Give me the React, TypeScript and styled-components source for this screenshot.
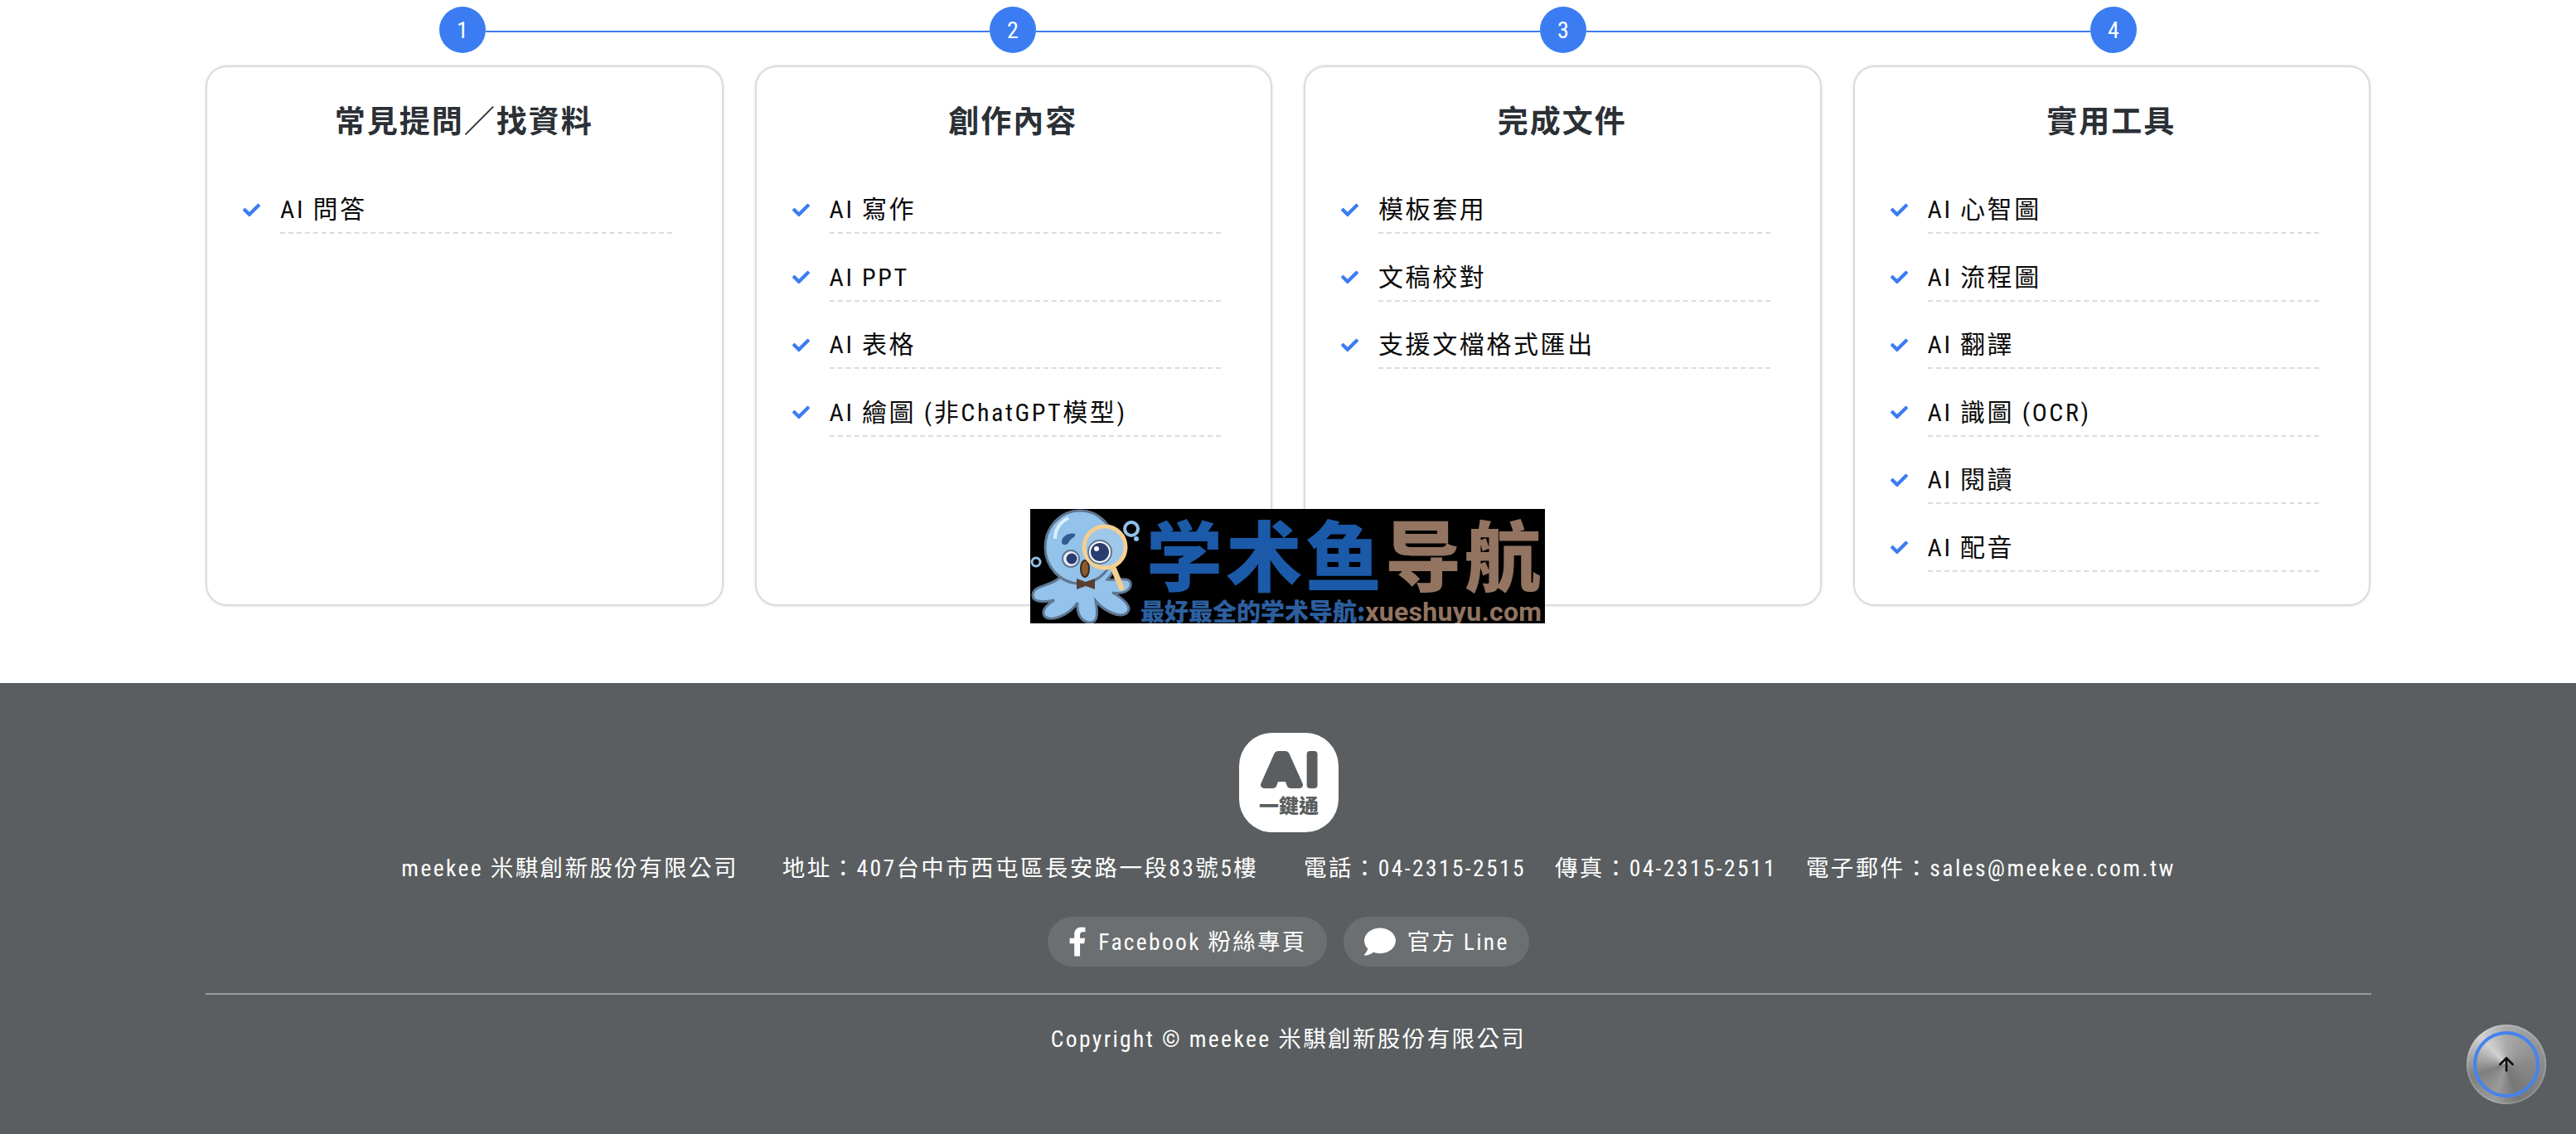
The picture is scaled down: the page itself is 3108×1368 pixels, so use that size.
import React from 'react';
import styled, { createGlobalStyle } from 'styled-components';
import { FaCheck, FaComment, FaFacebookF } from 'react-icons/fa';
import { ArrowUp } from 'lucide-react';

const FONT = `Roboto, "Noto Sans CJK TC", sans-serif`;

const GlobalStyle = createGlobalStyle`
  html, body {
    margin: 0;
    padding: 0;
    background: #fff;
    height: 1368px;
    overflow: hidden;
    font-family: ${FONT};
    font-stretch: 75%;
  }
`;

const Main = styled.main`
  background: #fff;
  padding: 8px 248px 93px 248px;
`;

const Steps = styled.div`
  display: flex;
  align-items: center;
  padding: 0 282px 0 282px;
  margin-bottom: 15px;
`;

const StepDot = styled.div`
  width: 56px;
  height: 56px;
  flex: none;
  border-radius: 50%;
  background: #3b7cf2;
  color: #fff;
  font-size: 28px;
  display: flex;
  align-items: center;
  justify-content: center;
`;

const StepLine = styled.div`
  flex: 1;
  height: 2px;
  margin-top: 4px;
  background: #3b7cf2;
`;

const Cards = styled.div`
  display: grid;
  grid-template-columns: repeat(4, 1fr);
  gap: 38px;
`;

const Card = styled.section`
  border: 2px solid #dcdcdc;
  border-radius: 26px;
  box-shadow: 0 0 3px rgba(0, 0, 0, 0.15);
  padding: 42px 60px 12px 43px;
  height: 652px;
  box-sizing: border-box;
`;

const CardTitle = styled.h3`
  margin: 0 -16px 59px 0;
  text-align: center;
  font-size: 37px;
  line-height: 50px;
  font-weight: 700;
  letter-spacing: 2px;
  color: #2b3036;
`;

const List = styled.ul`
  list-style: none;
  margin: 0;
  padding: 0;
`;

const Item = styled.li`
  display: flex;
  align-items: flex-start;
  margin-bottom: 31.5px;
  color: #0a0a0a;
  font-size: 30px;
  line-height: 42px;
  letter-spacing: 2.6px;
`;

const Tick = styled.span`
  flex: none;
  width: 45px;
  height: 42px;
  display: flex;
  align-items: center;
  color: #3b7cf2;
  font-size: 21px;
`;

const ItemText = styled.span`
  flex: 1;
  padding-bottom: 6px;
  border-bottom: 2px dashed #dcdcdc;
`;

const Footer = styled.footer`
  background: #5a5e60;
  height: 544px;
  padding: 60px 247px 0 248px;
  box-sizing: border-box;
  color: #fff;
  display: flex;
  flex-direction: column;
  align-items: center;
`;

const LogoBox = styled.div`
  width: 120px;
  height: 120px;
  flex: none;
`;

const LogoLetter = styled.text`
  font-family: Roboto, sans-serif;
  font-stretch: normal;
  font-size: 52px;
  fill: #5a5e60;
  stroke: #5a5e60;
  stroke-width: 8px;
  stroke-linejoin: round;
  text-anchor: middle;
`;

const LogoName = styled.text`
  font-family: "Noto Sans CJK TC", sans-serif;
  font-size: 24px;
  font-weight: 900;
  fill: #5a5e60;
  text-anchor: middle;
`;

const InfoRow = styled.div`
  display: flex;
  margin-top: 25px;
  font-size: 27.5px;
  line-height: 38px;
  letter-spacing: 2.4px;
  white-space: nowrap;
`;

const InfoItem = styled.span<{ $gap: number }>`
  margin-right: ${(p) => p.$gap}px;
`;

const Socials = styled.div`
  display: flex;
  gap: 20px;
  margin-top: 39px;
`;

const Social = styled.a`
  height: 60px;
  padding: 0 24px 0 25px;
  display: flex;
  align-items: center;
  gap: 14px;
  border-radius: 30px;
  background: #6b6f71;
  color: #fff;
  font-size: 27.5px;
  letter-spacing: 2.3px;
  white-space: nowrap;
`;

const SocialLabel = styled.span`
  margin-top: -5px;
`;

const FacebookIcon = styled(FaFacebookF)`
  width: 22px;
  height: 38px;
`;

const Divider = styled.hr`
  width: 100%;
  height: 2px;
  border: 0;
  margin: 32px 0 0;
  background: #999b9c;
`;

const Copyright = styled.p`
  margin: 35px 0 0;
  font-size: 27.5px;
  line-height: 38px;
  letter-spacing: 2.4px;
`;

const ToTop = styled.button`
  position: absolute;
  left: 2976px;
  top: 1236px;
  width: 96px;
  height: 96px;
  padding: 0;
  border: 0;
  border-radius: 50%;
  background: conic-gradient(#a9a9a9, #8a8a8a 25%, #777 45%, #9a9a9a 55%, #7f7f7f 70%, #d2d2d2 88%, #a9a9a9);
  box-shadow: inset 0 0 3px rgba(255, 255, 255, 0.6);
  display: flex;
  align-items: center;
  justify-content: center;
  color: #0c0c0c;

  &::before {
    content: '';
    position: absolute;
    inset: 8px;
    border: 4px solid #4583ee;
    border-radius: 50%;
  }
`;

const Watermark = styled.div`
  position: absolute;
  left: 1243px;
  top: 614px;
  width: 621px;
  height: 138px;
  background: #000;
  overflow: hidden;
  display: flex;
`;

const Octopus = styled.svg`
  width: 136px;
  height: 138px;
  flex: none;
`;

const WatermarkText = styled.div`
  flex: 1;
  font-family: "Noto Sans CJK SC", sans-serif;
  font-stretch: normal;
  font-weight: 900;
  white-space: nowrap;
`;

const BigName = styled.div`
  display: flex;
  font-size: 92px;
  line-height: 104px;
  height: 106px;
  letter-spacing: 4px;
  padding-left: 4px;
`;

const Blue = styled.span`
  color: #1b5aa9;
`;

const Brown = styled.span`
  color: #927461;
`;

const TagBlue = styled.span`
  color: #2c5f9f;
`;

const Tagline = styled.div`
  font-size: 29px;
  line-height: 32px;
  letter-spacing: 0;
  margin-left: -3px;
`;

const Slim = styled(Brown)`
  font-family: Roboto, sans-serif;
  font-size: 32px;
  font-weight: 700;
  letter-spacing: 0.3px;
`;

const columns = [
  { title: '常見提問／找資料', items: ['AI 問答'] },
  { title: '創作內容', items: ['AI 寫作', 'AI PPT', 'AI 表格', 'AI 繪圖 (非ChatGPT模型)'] },
  { title: '完成文件', items: ['模板套用', '文稿校對', '支援文檔格式匯出'] },
  { title: '實用工具', items: ['AI 心智圖', 'AI 流程圖', 'AI 翻譯', 'AI 識圖 (OCR)', 'AI 閱讀', 'AI 配音'] },
];

const info = [
  { text: 'meekee 米騏創新股份有限公司', gap: 53 },
  { text: '地址：407台中市西屯區長安路一段83號5樓', gap: 55 },
  { text: '電話：04-2315-2515', gap: 35 },
  { text: '傳真：04-2315-2511', gap: 35 },
  { text: '電子郵件：sales@meekee.com.tw', gap: 0 },
];

const AppLogo = () => (
  <svg viewBox="0 0 120 120" width="120" height="120">
    <rect width="120" height="120" rx="40" fill="#fff" />
    <LogoLetter transform="translate(51.5 63) scale(1.2 1)" fontWeight="700">
      A
    </LogoLetter>
    <LogoLetter x="88" y="63" fontWeight="400">
      I
    </LogoLetter>
    <LogoName x="60" y="97">
      一鍵通
    </LogoName>
  </svg>
);

const OctopusArt = () => (
  <Octopus viewBox="0 0 136 138">
    <g stroke="#5f7691" strokeWidth="3" fill="#93c2ea">
      <path d="M34 84C22 94 3 92 3 104c0 10 16 8 26 6-10 6-16 12-12 19 6 8 30 0 40-16-1 10 2 22 14 24 12 1 10-14 8-26 10 12 30 22 38 14 7-7-6-18-18-24 12 2 24-2 22-12-2-8-18-2-28-4 8-8 12-20 4-30L80 60z" />
      <ellipse cx="60" cy="46" rx="42" ry="44" />
    </g>
    <path d="M30 36c0-12 6-20 16-25" stroke="#dcefff" strokeWidth="4" fill="none" />
    <path d="M38 40c0-8 10-12 16-10 2 4-6 5-8 11-2 3-8 3-8-1z" fill="#2f5c8f" />
    <circle cx="49" cy="60" r="10" fill="#e8eef5" stroke="#5f7691" strokeWidth="2" />
    <circle cx="50" cy="60" r="6.5" fill="#2b3d70" />
    <ellipse cx="66" cy="72" rx="5" ry="10" fill="#8a5a2c" stroke="#3a2a20" strokeWidth="2" />
    <path d="M56 84l11 4 11-4v13l-11-4-11 4z" fill="#5a3d33" />
    <circle cx="90" cy="46" r="25" fill="#9ec7ea" stroke="#f4cf92" strokeWidth="5" />
    <circle cx="84" cy="52" r="14" fill="#fff" stroke="#5f7691" strokeWidth="2" />
    <circle cx="84" cy="52" r="11" fill="#2b3d70" />
    <circle cx="80" cy="48" r="3" fill="#fff" />
    <path d="M101 73l9 22" stroke="#f4cf92" strokeWidth="7" strokeLinecap="round" />
    <circle cx="122" cy="24" r="8" fill="none" stroke="#93c2ea" strokeWidth="4" />
    <circle cx="128" cy="36" r="3" fill="#93c2ea" />
    <circle cx="7" cy="64" r="5" fill="none" stroke="#93c2ea" strokeWidth="3" />
  </Octopus>
);

export default function App() {
  return (
    <>
      <GlobalStyle />
      <Main>
        <Steps>
          {columns.map((_, i) => (
            <React.Fragment key={i}>
              {i > 0 && <StepLine />}
              <StepDot>{i + 1}</StepDot>
            </React.Fragment>
          ))}
        </Steps>
        <Cards>
          {columns.map((col) => (
            <Card key={col.title}>
              <CardTitle>{col.title}</CardTitle>
              <List>
                {col.items.map((item) => (
                  <Item key={item}>
                    <Tick>
                      <FaCheck />
                    </Tick>
                    <ItemText>{item}</ItemText>
                  </Item>
                ))}
              </List>
            </Card>
          ))}
        </Cards>
      </Main>
      <Footer>
        <LogoBox>
          <AppLogo />
        </LogoBox>
        <InfoRow>
          {info.map((row) => (
            <InfoItem key={row.text} $gap={row.gap}>
              {row.text}
            </InfoItem>
          ))}
        </InfoRow>
        <Socials>
          <Social>
            <FacebookIcon />
            <SocialLabel>Facebook 粉絲專頁</SocialLabel>
          </Social>
          <Social>
            <FaComment size={38} />
            <SocialLabel>官方 Line</SocialLabel>
          </Social>
        </Socials>
        <Divider />
        <Copyright>Copyright © meekee 米騏創新股份有限公司</Copyright>
      </Footer>
      <Watermark>
        <OctopusArt />
        <WatermarkText>
          <BigName>
            <Blue>学术鱼</Blue>
            <Brown>导航</Brown>
          </BigName>
          <Tagline>
            <TagBlue>最好最全的学术导航:</TagBlue>
            <Slim>xueshuyu.com</Slim>
          </Tagline>
        </WatermarkText>
      </Watermark>
      <ToTop aria-label="top">
        <ArrowUp size={26} strokeWidth={2.4} />
      </ToTop>
    </>
  );
}
